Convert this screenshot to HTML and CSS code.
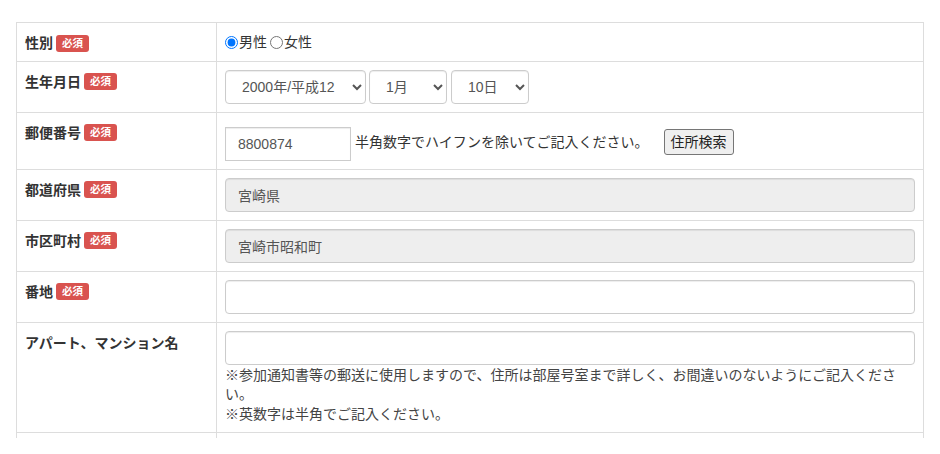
FILE: index.html
```html
<!DOCTYPE html>
<html lang="ja">
<head>
<meta charset="utf-8">
<title>申込フォーム</title>
<link rel="stylesheet" href="styles.css">
</head>
<body>
<div class="wrap">
  <table class="form-table">
    <tbody>
      <tr class="row-gender">
        <th><span class="lbl">性別</span><span class="req">必須</span></th>
        <td>
          <label class="radio"><input type="radio" name="sex" checked>男性</label><label class="radio"><input type="radio" name="sex">女性</label>
        </td>
      </tr>
      <tr>
        <th><span class="lbl">生年月日</span><span class="req">必須</span></th>
        <td>
          <div class="selects">
            <select class="ctrl sel-year"><option>2000年/平成12</option></select>
            <select class="ctrl sel-month"><option>1月</option></select>
            <select class="ctrl sel-day"><option>10日</option></select>
          </div>
        </td>
      </tr>
      <tr>
        <th><span class="lbl">郵便番号</span><span class="req">必須</span></th>
        <td>
          <div class="zip">
            <input class="ctrl zip-input" type="text" value="8800874">
            <span class="zip-note">半角数字でハイフンを除いてご記入ください。</span>
            <button class="zip-btn" type="button">住所検索</button>
          </div>
        </td>
      </tr>
      <tr>
        <th><span class="lbl">都道府県</span><span class="req">必須</span></th>
        <td><input class="ctrl full" type="text" value="宮崎県" readonly></td>
      </tr>
      <tr>
        <th><span class="lbl">市区町村</span><span class="req">必須</span></th>
        <td><input class="ctrl full" type="text" value="宮崎市昭和町" readonly></td>
      </tr>
      <tr>
        <th><span class="lbl">番地</span><span class="req">必須</span></th>
        <td><input class="ctrl full" type="text"></td>
      </tr>
      <tr>
        <th><span class="lbl">アパート、マンション名</span></th>
        <td>
          <input class="ctrl full" type="text">
          <p class="help">※参加通知書等の郵送に使用しますので、住所は部屋号室まで詳しく、お間違いのないようにご記入ください。<br>※英数字は半角でご記入ください。</p>
        </td>
      </tr>
      <tr class="row-tail">
        <th></th>
        <td></td>
      </tr>
    </tbody>
  </table>
</div>
</body>
</html>
```

FILE: styles.css
```css
html, body {
  margin: 0;
  padding: 0;
  background: #fff;
}

body {
  font-family: "Liberation Sans", "Noto Sans CJK JP", sans-serif;
  font-size: 14px;
  line-height: 20px;
  color: #333;
}

.wrap {
  padding: 22px 16px 0;
}

.form-table {
  width: 100%;
  border-collapse: collapse;
  border-spacing: 0;
}

.form-table th,
.form-table td {
  border: 1px solid #ddd;
  padding: 8px;
  vertical-align: top;
  text-align: left;
}

.form-table th {
  width: 183px;
  font-weight: bold;
  padding-top: 9px;
  padding-bottom: 6px;
}

.lbl {
  vertical-align: middle;
}

.req {
  display: inline-block;
  margin-left: 3px;
  padding: 2px 6px 3px;
  font-size: 10.5px;
  line-height: 12px;
  font-weight: bold;
  color: #fff;
  background: #d9534f;
  border-radius: 3px;
  vertical-align: middle;
}

.row-gender td {
  padding-top: 9px;
  padding-bottom: 7px;
}

.radio {
  display: inline-flex;
  align-items: center;
  font-size: 14px;
}

.radio input {
  margin: 0 1px 0 0;
  width: 13px;
  height: 13px;
}

.radio + .radio input {
  margin-left: 3px;
}

.ctrl {
  box-sizing: border-box;
  height: 34px;
  padding: 6px 12px;
  font-family: inherit;
  font-size: 14px;
  line-height: 20px;
  color: #555;
  background: #fff;
  border: 1px solid #ccc;
  border-radius: 4px;
  box-shadow: inset 0 1px 1px rgba(0, 0, 0, 0.075);
  margin: 0;
}

.selects {
  display: flex;
  gap: 3px;
}

.sel-year { width: 141px; }
.sel-month { width: 78px; }
.sel-day { width: 78px; margin-left: 1px; }

select.ctrl {
  padding: 6px 8px 6px 12px;
}

.zip {
  display: flex;
  align-items: center;
  height: 40px;
}

.zip-input {
  width: 126px;
  margin-top: 6px;
  border-radius: 0;
}

.zip-note {
  margin-left: 4px;
  margin-top: 3px;
}

.zip-btn {
  margin-left: 15px;
  margin-top: 3px;
  height: 26px;
  padding: 1px 6px;
  font-family: inherit;
  font-size: 14px;
  line-height: 20px;
  color: #222;
  background: #efefef;
  border: 1px solid #767676;
  border-radius: 3px;
}

.full {
  display: block;
  width: 100%;
}

.ctrl[readonly] {
  background: #eee;
}

.help {
  margin: 1px 0 0;
  color: #444;
  line-height: 19.5px;
}

.row-tail th,
.row-tail td {
  height: 5px;
  padding: 0;
  border-bottom: none;
}
```
